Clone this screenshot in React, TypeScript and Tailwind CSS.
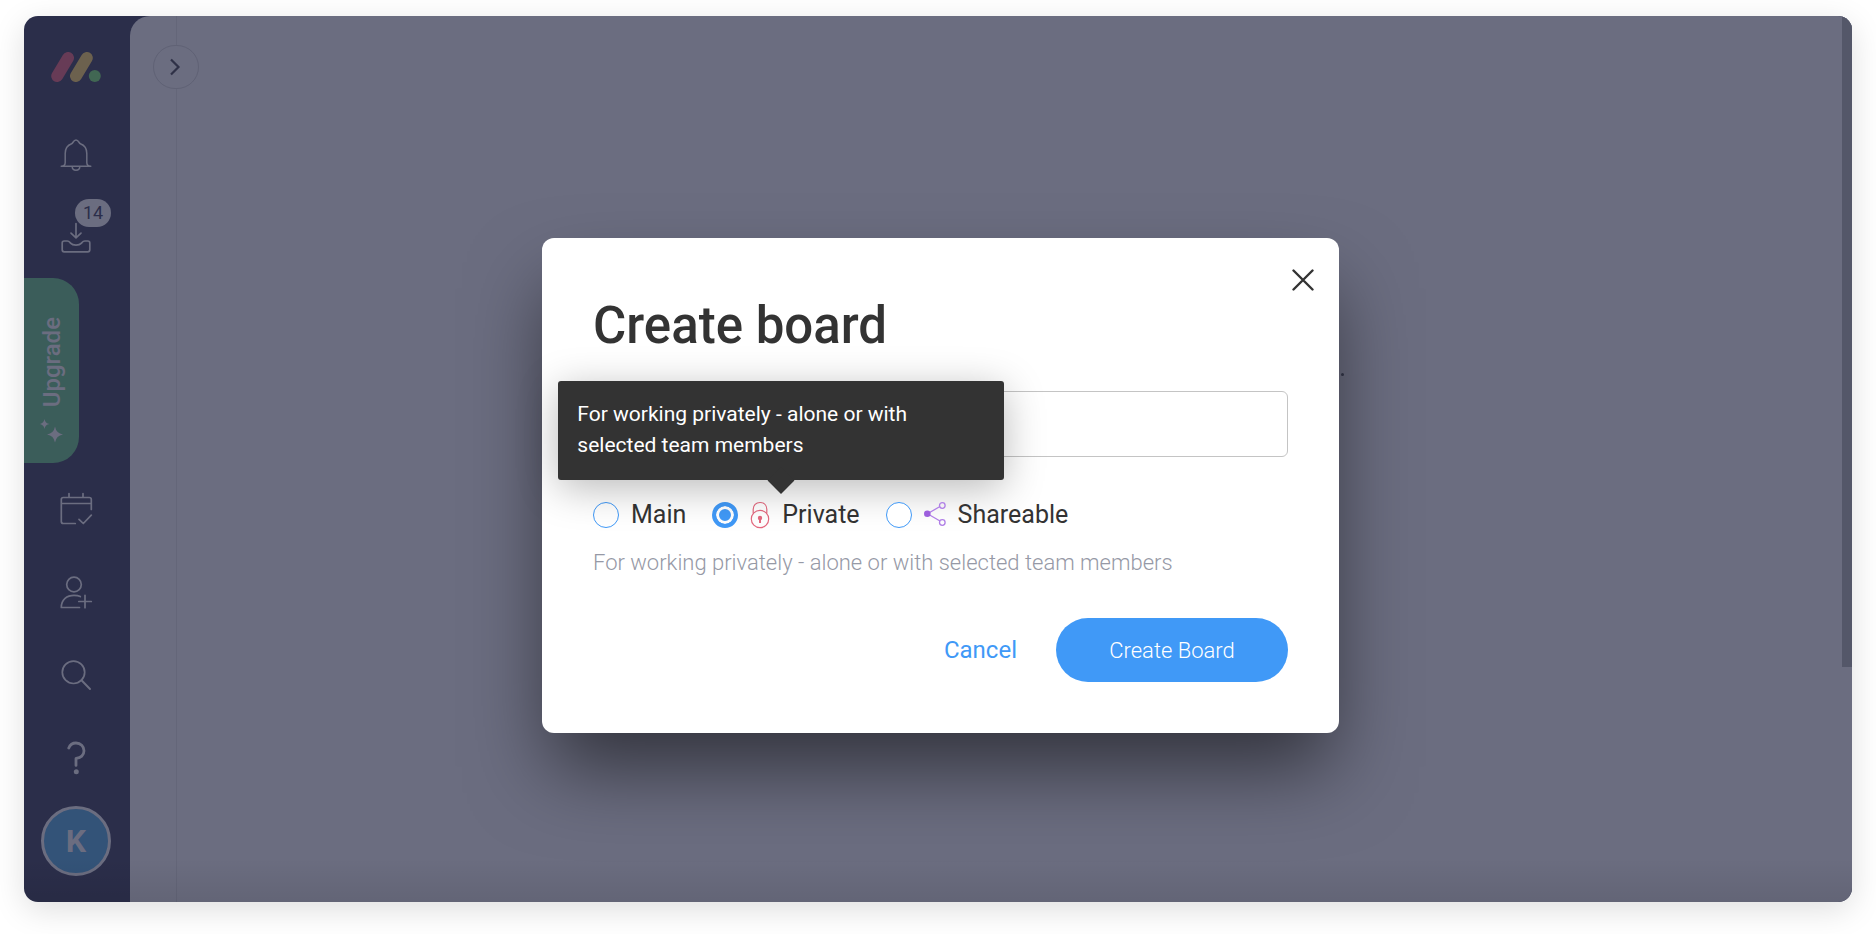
import { useState } from 'react';
import type { ReactNode } from 'react';

type BoardKind = 'main' | 'private' | 'shareable';

const descriptions: Record<BoardKind, string> = {
  main: 'Visible to everyone in your account',
  private: 'For working privately - alone or with selected team members',
  shareable: 'For working with guests outside your team',
};

function Logo() {
  return (
    <svg width="50" height="30" viewBox="0 0 50 30" strokeLinecap="round" aria-hidden="true">
      <path d="M6.2 24 17 6" stroke="#673b56" strokeWidth="12" />
      <path d="M25 24 35.8 6" stroke="#6c614e" strokeWidth="12" />
      <circle cx="43.8" cy="24" r="6" fill="#416753" />
    </svg>
  );
}

function SideIcon({ children }: { children: ReactNode }) {
  return (
    <svg
      width="34"
      height="34"
      viewBox="0 0 34 34"
      fill="none"
      stroke="currentColor"
      strokeWidth="1.7"
      strokeLinecap="round"
      strokeLinejoin="round"
      aria-hidden="true"
    >
      {children}
    </svg>
  );
}

function BellIcon() {
  return (
    <SideIcon>
      <path
        strokeWidth="1.5"
        d="M2.2 28.2h29.600M2.2 28.2c2.800 0 4-.8 4-3.600v-9.100c0-4.800 2.400-8.200 6.400-9.700 1.600-.6 1.600-3.700 4.400-3.700s2.800 3.100 4.400 3.700c4 1.500 6.400 4.900 6.400 9.700v9.100c0 2.800 1.200 3.600 4 3.600M13.200 28.600c0 2.300 1.600 3.700 3.800 3.700s3.800-1.400 3.800-3.700"
      />
    </SideIcon>
  );
}

function InboxIcon() {
  return (
    <SideIcon>
      <path d="M17 2.500V16.500M12 12.200l5 4.600 5-4.600" />
      <path d="M5.200 20h3c2 0 2.300 1 3.300 2.200 2.400 2.600 8.600 2.600 11 0 1-1.200 1.300-2.200 3.300-2.200h3c1.200 0 2 .8 2 2v6.800c0 1.200-.8 2-2 2H5.200c-1.200 0-2-.8-2-2v-6.800c0-1.200.8-2 2-2z" />
    </SideIcon>
  );
}

function CalendarIcon() {
  return (
    <SideIcon>
      <path d="M16.300 31.500H4.300c-1.200 0-2-.8-2-2V7.500c0-1.200.8-2 2-2h26c1.200 0 2 .8 2 2V17.500M2.300 11.500h30M10 1.500v4M24 1.500v4M20 27.300l4.300 4.200 8-8.300" />
    </SideIcon>
  );
}

function InviteIcon() {
  return (
    <SideIcon>
      <circle cx="15" cy="9.500" r="7.300" />
      <path d="M21.300 21.500c-2-1-4-1.200-6.300-1.200-7 0-12.700 4.200-12.700 12.200H20.500M19.800 26.500h12.500M26 20.300v12.400" />
    </SideIcon>
  );
}

function SearchIcon() {
  return (
    <SideIcon>
      <circle cx="14.500" cy="14.300" r="11.200" />
      <path d="M22.500 22.300 31 31" strokeWidth="2" />
    </SideIcon>
  );
}

function HelpIcon() {
  return (
    <SideIcon>
      <path
        strokeWidth="2.800"
        d="M9.800 7C11 3.800 13.700 2 17 2c4.600 0 8 3.200 8 7.800 0 4.500-3.300 7.200-8 7.600v7"
      />
      <circle cx="17.300" cy="30.700" r="2.500" fill="currentColor" stroke="none" />
    </SideIcon>
  );
}

function SparkleIcon() {
  return (
    <svg width="24" height="24" viewBox="0 0 24 24" fill="currentColor" aria-hidden="true">
      <path d="M4.500 0Q5.200 4.300 9.500 5 5.200 5.700 4.500 10 3.800 5.700-.5 5 3.800 4.300 4.500 0z" />
      <path d="M15 7.500Q16.200 14.300 23 15.500 16.200 16.700 15 23.500 13.800 16.700 7 15.500 13.800 14.300 15 7.500z" />
    </svg>
  );
}

function LockIcon() {
  return (
    <svg width="20" height="28" viewBox="0 0 20 28" fill="none" stroke="#e4697f" aria-hidden="true">
      <circle cx="10" cy="18" r="8.700" strokeWidth="1.200" />
      <path d="M3.200 12.500V8.300C3.200 4.300 6 1.500 10 1.500s6.800 2.800 6.800 6.800v4.200" strokeWidth="1.200" />
      <path d="M10 17v5" strokeWidth="2" />
      <circle cx="10" cy="17" r="2.200" fill="#e4697f" stroke="none" />
    </svg>
  );
}

function ShareIcon() {
  return (
    <svg width="22" height="28" viewBox="0 0 22 28" fill="none" stroke="#b07fe6" aria-hidden="true">
      <path d="M3.500 12.700 16 5.500M3.500 12.700 16 20" strokeWidth="1.300" />
      <circle cx="3.300" cy="12.700" r="3.300" fill="#9d5fdd" stroke="none" />
      <circle cx="18.300" cy="4.500" r="2.800" strokeWidth="1.300" />
      <circle cx="18.300" cy="21.500" r="2.800" strokeWidth="1.300" />
    </svg>
  );
}

function SideButton({ label, children }: { label: string; children: ReactNode }) {
  return (
    <button type="button" aria-label={label} className="flex h-[83px] w-full items-center justify-center">
      {children}
    </button>
  );
}

function Sidebar() {
  return (
    <nav className="flex w-[106px] shrink-0 flex-col items-center pr-[2px] text-[#6b6d80]">
      <a href="#" aria-label="Home" className="flex h-[97px] items-center pt-1">
        <Logo />
      </a>
      <SideButton label="Notifications">
        <BellIcon />
      </SideButton>
      <SideButton label="Inbox">
        <span className="relative">
          <InboxIcon />
          <span className="absolute bottom-7 left-4 flex h-7 w-9 items-center justify-center rounded-full bg-[#6b6d80] text-lg text-[#2b2e4a]">
            14
          </span>
        </span>
      </SideButton>
      <div className="-mt-px flex h-[189px] w-full items-start">
        <button
          type="button"
          className="flex h-[185px] w-[55px] flex-col items-center justify-end gap-3 rounded-r-[26px] bg-[#3b5d5a] pb-5"
        >
          <span className="rotate-180 text-2xl leading-7 font-medium [writing-mode:vertical-rl]">Upgrade</span>
          <SparkleIcon />
        </button>
      </div>
      <SideButton label="My week">
        <CalendarIcon />
      </SideButton>
      <SideButton label="Invite members">
        <InviteIcon />
      </SideButton>
      <SideButton label="Search">
        <SearchIcon />
      </SideButton>
      <SideButton label="Help">
        <HelpIcon />
      </SideButton>
      <SideButton label="Profile">
        <span className="flex size-[70px] items-center justify-center rounded-full border-[3px] border-[#6b6d80] bg-[#335378] text-[32px] font-bold">
          K
        </span>
      </SideButton>
    </nav>
  );
}

interface OptionProps {
  kind: BoardKind;
  label: string;
  selected: BoardKind;
  onSelect: (kind: BoardKind) => void;
  icon?: ReactNode;
  tooltip?: string;
}

function KindOption({ kind, label, selected, onSelect, icon, tooltip }: OptionProps) {
  return (
    <div className="relative">
      <label className="flex h-7 items-center gap-3 text-[25px] leading-7 text-[#333333]">
        <input
          type="radio"
          name="kind"
          value={kind}
          checked={selected === kind}
          onChange={() => onSelect(kind)}
          className="size-[26px] appearance-none rounded-full border border-[#4099f7] bg-white checked:border-4 checked:bg-[#4099f7] checked:shadow-[inset_0_0_0_3px_#ffffff]"
        />
        {icon}
        <span>{label}</span>
      </label>
      {tooltip && (
        <div
          role="tooltip"
          className="absolute bottom-full -left-[154px] mb-[21px] w-[446px] rounded-[3px] bg-[#333333] pt-[18px] pr-20 pb-[19px] pl-[19px] text-[21px] leading-[31px] text-white shadow-[0_8px_40px_rgba(0,0,0,0.28)]"
        >
          {tooltip}
          <span className="absolute -bottom-[10px] left-1/2 size-[19px] -translate-x-1/2 rotate-45 bg-[#333333]" />
        </div>
      )}
    </div>
  );
}

function CreateBoardDialog() {
  const [name, setName] = useState('');
  const [kind, setKind] = useState<BoardKind>('private');

  return (
    <form
      role="dialog"
      aria-labelledby="dialog-title"
      onSubmit={(e) => e.preventDefault()}
      className="relative w-[797px] rounded-xl bg-white p-[51px] shadow-[0_42px_80px_-8px_rgba(0,0,0,0.54)]"
    >
      <button
        type="button"
        aria-label="Close"
        className="absolute top-[22px] right-4 flex size-10 items-center justify-center"
      >
        <svg width="22" height="22" viewBox="0 0 22 22" stroke="#333333" strokeWidth="2.400" strokeLinecap="round">
          <path d="M1.500 1.500l19 19M20.500 1.500l-19 19" />
        </svg>
      </button>
      <span className="absolute top-[135px] left-full ml-[2px] size-[3px] rounded-full bg-[#292b3b]" />

      <h1 id="dialog-title" className="text-[51px] leading-[74px] font-medium text-[#333333]">
        Create board
      </h1>
      <input
        type="text"
        aria-label="Board name"
        value={name}
        onChange={(e) => setName(e.target.value)}
        className="mt-7 block h-[66px] w-full rounded-md border border-[#c4c4c4] px-5 text-2xl text-[#333333] outline-none"
      />

      <div className="mt-11 flex gap-[26px]">
        <KindOption kind="main" label="Main" selected={kind} onSelect={setKind} />
        <KindOption
          kind="private"
          label="Private"
          selected={kind}
          onSelect={setKind}
          icon={<LockIcon />}
          tooltip={descriptions.private}
        />
        <KindOption
          kind="shareable"
          label="Shareable"
          selected={kind}
          onSelect={setKind}
          icon={<ShareIcon />}
        />
      </div>
      <p className="mt-5 text-[22px] leading-7 font-light text-[#9699a6]">{descriptions[kind]}</p>

      <div className="mt-[41px] flex items-center justify-end gap-[39px]">
        <button type="button" className="text-2xl leading-7 text-[#4099f7]">
          Cancel
        </button>
        <button
          type="submit"
          className="h-16 w-[232px] rounded-full bg-[#4099f7] text-[22px] font-light text-white"
        >
          Create Board
        </button>
      </div>
    </form>
  );
}

export default function App() {
  return (
    <div className="min-h-screen bg-white px-6 pt-4 pb-8 font-[Roboto,sans-serif]">
      <div className="rounded-[14px] shadow-[0_8px_32px_rgba(0,0,0,0.13)]">
        <div className="relative flex min-h-[calc(100vh-48px)] overflow-hidden rounded-[14px] bg-[#2b2e4a]">
          <Sidebar />
          <main className="flex flex-1 rounded-tl-[20px] bg-[#6b6d80]">
            <div className="relative w-[47px] border-r border-[#646679]">
              <button
                type="button"
                aria-label="Expand panel"
                className="absolute top-[29px] -right-[23px] flex h-11 w-[46px] items-center justify-center rounded-full border border-[#606275] bg-[#6b6d80]"
              >
                <svg width="12" height="18" viewBox="0 0 12 18" fill="none" stroke="#2f3147" strokeWidth="2.200">
                  <path d="M1 1.500 8.500 9 1 16.500" />
                </svg>
              </button>
            </div>
            <div className="ml-auto flex w-[10px] flex-col">
              <div className="grow-[651] bg-[#545769]" />
              <div className="grow-[235]" />
            </div>
          </main>
          <div className="absolute inset-0 flex items-center justify-center bg-[linear-gradient(to_top,rgba(0,0,0,0.08),transparent_44px)] pt-[53px] pl-[5px]">
            <CreateBoardDialog />
          </div>
        </div>
      </div>
    </div>
  );
}
